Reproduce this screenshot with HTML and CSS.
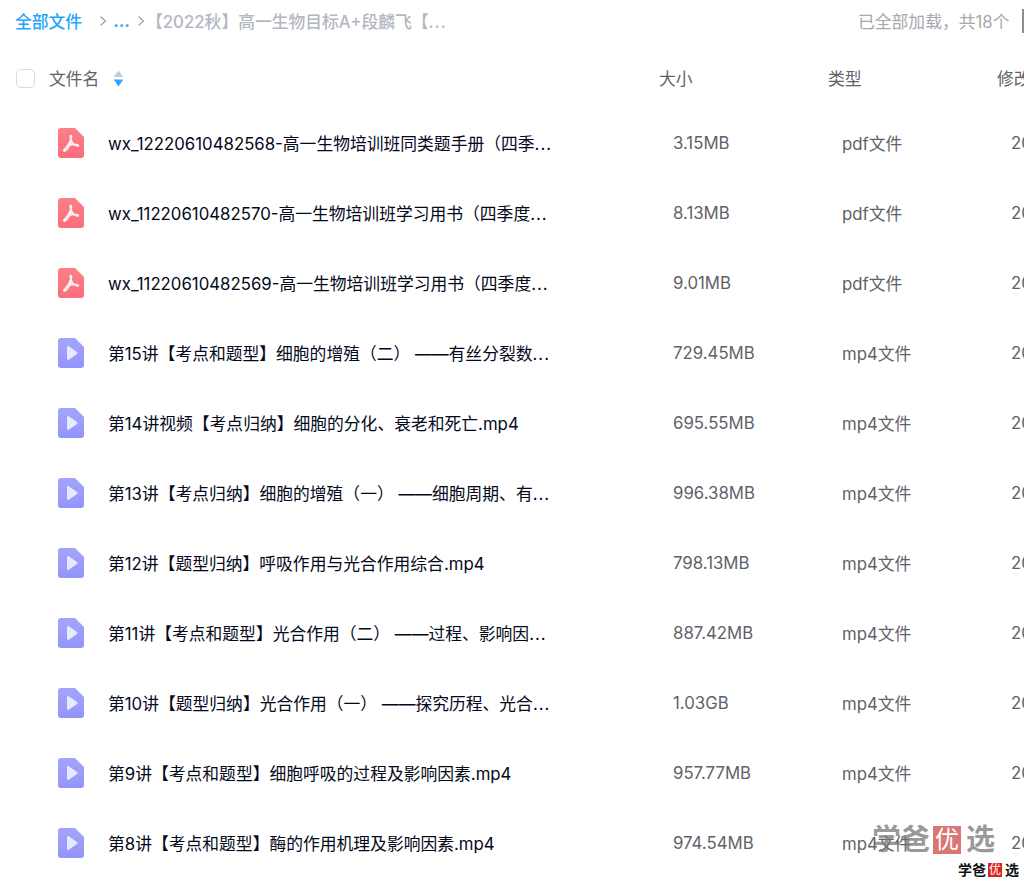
FILE: index.html
```html
<!DOCTYPE html>
<html lang="zh">
<head>
<meta charset="utf-8">
<title>全部文件</title>
<link rel="stylesheet" href="styles.css">
</head>
<body>
<svg class="defs" width="0" height="0" aria-hidden="true">
  <defs>
    <linearGradient id="pdf-fill" x1="0" y1="0" x2="0" y2="1"><stop offset="0" stop-color="#fb8088"/><stop offset="1" stop-color="#fb6d7b"/></linearGradient>
    <linearGradient id="mp4-fill" x1="0" y1="0" x2="0" y2="1"><stop offset="0" stop-color="#a3a5fb"/><stop offset="1" stop-color="#9394fb"/></linearGradient>
    <symbol id="pdf" viewBox="0 0 26 30">
      <path d="M3 0H17L26 9V27A3 3 0 0 1 23 30H3A3 3 0 0 1 0 27V3A3 3 0 0 1 3 0Z" fill="url(#pdf-fill)"/>
      <path d="M12.8 7.5C13.6 7.5 13.6 9 13 11C12 14 9.5 18.5 6.8 21C5.6 22 5.6 23.3 6.8 23C8.8 22.4 10.5 19.3 12 16.8C13 15 13.6 13.5 13.3 12.5L12.4 9.5C12.2 8.4 12.3 7.5 12.8 7.5ZM13.2 12.5C14.2 15 16.3 17 18.5 17.8C20 18.3 20.9 17.5 19.9 17C18.3 16.2 13.5 16.4 10.3 17.5" fill="none" stroke="#fff" stroke-opacity=".9" stroke-width="1.7" stroke-linecap="round" stroke-linejoin="round"/>
    </symbol>
    <symbol id="mp4" viewBox="0 0 26 30">
      <path d="M3 0H17L26 9V27A3 3 0 0 1 23 30H3A3 3 0 0 1 0 27V3A3 3 0 0 1 3 0Z" fill="url(#mp4-fill)"/>
      <path d="M9 9.3C9 8.3 10 7.8 10.8 8.3L19 13.9C19.7 14.4 19.7 15.5 19 16L10.8 21.7C10 22.2 9 21.7 9 20.7Z" fill="#e8e8fe"/>
    </symbol>
  </defs>
</svg>

<main class="page">
  <header class="crumbs">
    <div class="crumb-path">
      <span class="crumb-root">全部文件</span>
      <svg class="chev chev-first" viewBox="0 0 8 12" width="8" height="12"><path d="M1.5 1.5 6.5 6 1.5 10.5" fill="none" stroke="#9a9da6" stroke-width="1.1"/></svg>
      <span class="crumb-dots">...</span>
      <svg class="chev" viewBox="0 0 8 12" width="8" height="12"><path d="M1.5 1.5 6.5 6 1.5 10.5" fill="none" stroke="#9a9da6" stroke-width="1.1"/></svg>
      <span class="crumb-current">【2022秋】高一生物目标A+段麟飞【<span class="more">...</span></span>
    </div>
    <div class="crumb-count">已全部加载，共18个</div>
    <span class="crumb-bar"></span>
  </header>

  <div class="head">
    <span class="check"></span>
    <div class="head-name">文件名
      <svg class="sort" viewBox="0 0 10 16" width="11" height="17"><path d="M5 0.5 9.5 6.5H0.5Z" fill="#c6c9d0"/><path d="M0.5 9H9.5L5 15.5Z" fill="#2ea6fb"/></svg>
    </div>
    <span>大小</span>
    <span>类型</span>
    <span>修改时间</span>
  </div>

  <div class="rows">
    <div class="row"><svg class="file-icon"><use href="#pdf"/></svg><span class="name">wx_12220610482568-高一生物培训班同类题手册（四季<span class="more">...</span></span><span class="cell">3.15MB</span><span class="cell">pdf文件</span><span class="cell">2022-06-10</span></div>
    <div class="row"><svg class="file-icon"><use href="#pdf"/></svg><span class="name">wx_11220610482570-高一生物培训班学习用书（四季度<span class="more">...</span></span><span class="cell">8.13MB</span><span class="cell">pdf文件</span><span class="cell">2022-06-10</span></div>
    <div class="row"><svg class="file-icon"><use href="#pdf"/></svg><span class="name">wx_11220610482569-高一生物培训班学习用书（四季度<span class="more">...</span></span><span class="cell">9.01MB</span><span class="cell">pdf文件</span><span class="cell">2022-06-10</span></div>
    <div class="row"><svg class="file-icon"><use href="#mp4"/></svg><span class="name">第15讲【考点和题型】细胞的增殖（二） ——有丝分裂数<span class="more">...</span></span><span class="cell">729.45MB</span><span class="cell">mp4文件</span><span class="cell">2022-06-10</span></div>
    <div class="row"><svg class="file-icon"><use href="#mp4"/></svg><span class="name">第14讲视频【考点归纳】细胞的分化、衰老和死亡.mp4</span><span class="cell">695.55MB</span><span class="cell">mp4文件</span><span class="cell">2022-06-10</span></div>
    <div class="row"><svg class="file-icon"><use href="#mp4"/></svg><span class="name">第13讲【考点归纳】细胞的增殖（一） ——细胞周期、有<span class="more">...</span></span><span class="cell">996.38MB</span><span class="cell">mp4文件</span><span class="cell">2022-06-10</span></div>
    <div class="row"><svg class="file-icon"><use href="#mp4"/></svg><span class="name">第12讲【题型归纳】呼吸作用与光合作用综合.mp4</span><span class="cell">798.13MB</span><span class="cell">mp4文件</span><span class="cell">2022-06-10</span></div>
    <div class="row"><svg class="file-icon"><use href="#mp4"/></svg><span class="name">第11讲【考点和题型】光合作用（二） ——过程、影响因<span class="more">...</span></span><span class="cell">887.42MB</span><span class="cell">mp4文件</span><span class="cell">2022-06-10</span></div>
    <div class="row"><svg class="file-icon"><use href="#mp4"/></svg><span class="name">第10讲【题型归纳】光合作用（一） ——探究历程、光合<span class="more">...</span></span><span class="cell">1.03GB</span><span class="cell">mp4文件</span><span class="cell">2022-06-10</span></div>
    <div class="row"><svg class="file-icon"><use href="#mp4"/></svg><span class="name">第9讲【考点和题型】细胞呼吸的过程及影响因素.mp4</span><span class="cell">957.77MB</span><span class="cell">mp4文件</span><span class="cell">2022-06-10</span></div>
    <div class="row"><svg class="file-icon"><use href="#mp4"/></svg><span class="name">第8讲【考点和题型】酶的作用机理及影响因素.mp4</span><span class="cell">974.54MB</span><span class="cell">mp4文件</span><span class="cell">2022-06-10</span></div>
  </div>
</main>

<div class="mark">
  <div class="mark-big"><span>学爸</span><b>优</b><span>选</span></div>
  <div class="mark-small"><span>学爸</span><b>优</b><span>选</span></div>
</div>
</body>
</html>
```

FILE: styles.css
```css
* { box-sizing: border-box; }
html, body { margin: 0; height: 881px; overflow: hidden; background: #fff; }
body { font-family: Inter, "Noto Sans CJK SC", sans-serif; font-size: 16.8px; color: #03081a; }
.defs { position: absolute; }
.page { width: 1024px; height: 881px; overflow: hidden; }
.more { letter-spacing: 1px; }

.crumbs { display: flex; align-items: center; height: 41px; padding-left: 15px; }
.crumb-path { display: flex; align-items: center; width: 843px; white-space: nowrap; }
.crumb-root { color: #25a4fb; font-weight: 500; }
.chev-first { margin-left: 17px; }
.crumb-dots { color: #25a4fb; font-weight: 700; margin: 0 7px 0 6px; }
.crumb-current { color: #b4b7c2; font-weight: 500; margin-left: 1px; }
.crumb-count { color: #a6a8ae; width: 164px; white-space: nowrap; }
.crumb-bar { width: 2px; height: 24px; background: #8d8d8d; }

.head { display: grid; grid-template-columns: 34px 609px 169px 169px 200px; align-items: center; height: 36px; margin-top: 19px; padding-left: 16px; color: #5f6269; white-space: nowrap; }
.check { width: 19px; height: 19px; border: 1px solid #d9dade; border-radius: 5px; }
.head-name { display: flex; align-items: center; gap: 14px; margin-left: -1px; }

.rows { padding-top: 12px; }
.row { display: grid; grid-template-columns: 50px 565px 169px 169px 200px; align-items: center; height: 70px; padding-left: 58px; white-space: nowrap; }
.file-icon { width: 26px; height: 30px; }
.cell { color: #5f6269; }

.mark { position: absolute; left: 0; top: 0; width: 1024px; height: 881px; pointer-events: none; }
.mark-big { position: absolute; left: 872px; top: 823px; display: flex; align-items: center; gap: 2px; font-size: 29px; font-weight: 700; line-height: 34px; color: rgba(120, 120, 120, .75); }
.mark-big b { width: 28px; height: 28px; background: #d97676; color: #fff; font-size: 24px; font-weight: 400; line-height: 28px; text-align: center; margin: 0 3px 0 1px; }
.mark-small { position: absolute; left: 958px; top: 862px; display: flex; align-items: center; font-size: 14px; font-weight: 700; line-height: 16px; color: #111; }
.mark-small b { width: 14px; height: 14px; background: #d8231f; color: #fff; font-size: 12px; font-weight: 400; line-height: 14px; text-align: center; margin: 0 3px 0 2px; }
```
